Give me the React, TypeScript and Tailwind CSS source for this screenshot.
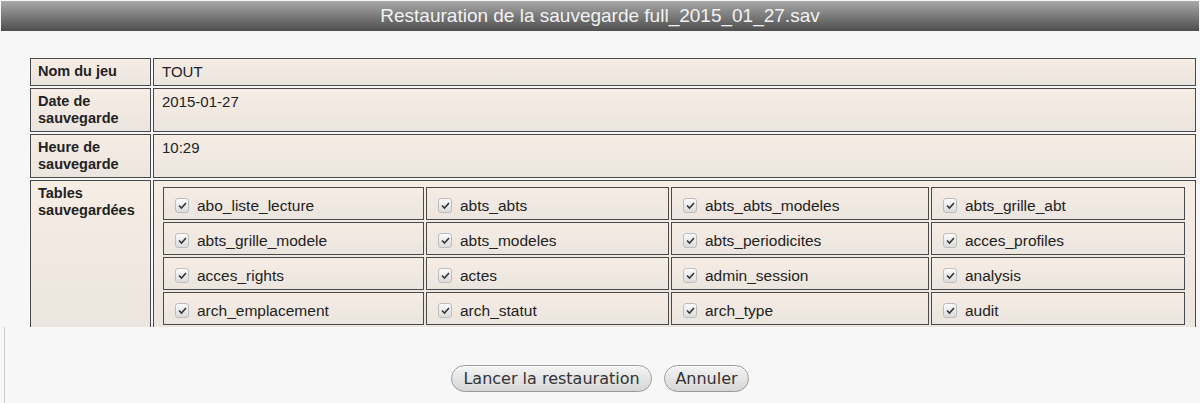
import React from "react";

const tables = [
  "abo_liste_lecture", "abts_abts", "abts_abts_modeles", "abts_grille_abt",
  "abts_grille_modele", "abts_modeles", "abts_periodicites", "acces_profiles",
  "acces_rights", "actes", "admin_session", "analysis",
  "arch_emplacement", "arch_statut", "arch_type", "audit",
];

const cell = "border border-[#4a4a4a] bg-gradient-to-b from-[#f6ede4] to-[#ebe5df] align-top";

function Check() {
  return (
    <span className="inline-flex h-[15px] w-[14px] items-center justify-center rounded-[3px] border border-[#bdbdbd] bg-gradient-to-b from-[#fbfbfb] to-[#dcdcdc]">
      <svg width="11" height="11" viewBox="0 0 11 11">
        <path d="M2 5.5 L4.5 8 L9 3" fill="none" stroke="#333" strokeWidth="1.6" />
      </svg>
    </span>
  );
}

function Row({ label, children, h }: { label: React.ReactNode; children: React.ReactNode; h?: string }) {
  return (
    <tr>
      <td className={`${cell} w-[121px] px-[7px] pt-[4px] text-[14.5px] font-bold leading-[17px] ${h ?? ""}`}>{label}</td>
      <td className={`${cell} px-[8px] pt-[4px] text-[15px] leading-[17px]`}>{children}</td>
    </tr>
  );
}

export default function App() {
  const rows = [0, 1, 2, 3].map(r => tables.slice(r * 4, r * 4 + 4));
  const widths = ["w-[261px]", "w-[243px]", "w-[258px]", "w-[254px]"];
  return (
    <div className="relative h-[403px] w-[1200px] bg-[#f7f7f7] text-[#222]" style={{ fontFamily: '"Liberation Sans", Arial, sans-serif' }}>
      <div className="pt-px pl-px pr-px">
        <div className="flex h-[30px] items-center justify-center bg-gradient-to-b from-[#a9a9a9] to-[#4f4f4f] text-[19px] text-[#f2f2f2]">
          Restauration de la sauvegarde full_2015_01_27.sav
        </div>
      </div>
      <div className="h-[296px] overflow-hidden pl-[28px] pr-[2px] pt-[25px]">
        <table className="w-full border-separate border-spacing-[2px]">
          <tbody>
            <Row label="Nom du jeu" h="h-[28px]">TOUT</Row>
            <Row label={<>Date de<br />sauvegarde</>} h="h-[44px]">2015-01-27</Row>
            <Row label={<>Heure de<br />sauvegarde</>} h="h-[44px]">10:29</Row>
            <tr>
              <td className={`${cell} w-[121px] px-[7px] pt-[4px] text-[14.5px] font-bold leading-[17px]`}>Tables<br />sauvegardées</td>
              <td className={`${cell} pl-[7px] pr-[8px] pt-[4px] pb-2`}>
                <table className="w-full border-separate border-spacing-[2.5px]">
                  <tbody>
                    {rows.map((r, i) => (
                      <tr key={i}>
                        {r.map((t, j) => (
                          <td key={t} className={`${cell} ${widths[j]} h-[33px] pl-[11px] align-top`}>
                            <span className="flex items-center gap-[8px] pt-[9px]">
                              <Check />
                              <span className="text-[15.5px] leading-[17px]">{t}</span>
                            </span>
                          </td>
                        ))}
                      </tr>
                    ))}
                  </tbody>
                </table>
              </td>
            </tr>
          </tbody>
        </table>
      </div>
      <div className="absolute left-[4px] top-[327px] h-[76px] w-px bg-[#cfcfcf]" />
      <div className="flex justify-center gap-[12px] pt-[38px]" style={{ fontFamily: '"DejaVu Sans", Verdana, sans-serif' }}>
        <button className="h-[27px] w-[201px] rounded-full border-[1.5px] border-[#9a9a9a] bg-gradient-to-b from-[#f4f4f4] to-[#d6d6d6] text-[16px] text-[#333] shadow-[inset_0_1px_0_#fff]">
          Lancer la restauration
        </button>
        <button className="h-[27px] w-[85px] rounded-full border-[1.5px] border-[#9a9a9a] bg-gradient-to-b from-[#f4f4f4] to-[#d6d6d6] text-[16px] text-[#333] shadow-[inset_0_1px_0_#fff]">
          Annuler
        </button>
      </div>
    </div>
  );
}
